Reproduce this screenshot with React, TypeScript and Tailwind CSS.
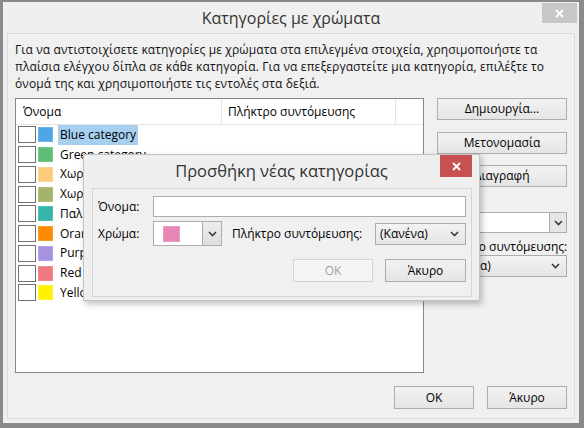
import React from 'react';

function Chevron() {
  return (
    <svg width="9" height="6" viewBox="0 0 9 6">
      <path d="M1 1l3.5 3.5L8 1" fill="none" stroke="#3c3c3c" strokeWidth="1.6" />
    </svg>
  );
}

function CloseX({ color }: { color: string }) {
  return (
    <svg width="9" height="9" viewBox="0 0 9 9">
      <path d="M1 1l7 7M8 1l-7 7" stroke={color} strokeWidth="1.8" />
    </svg>
  );
}

const categories = [
  { name: 'Blue category', color: 'bg-[#4ea6e6] border-[#6cb6ec]' },
  { name: 'Green category', color: 'bg-[#5fbd78] border-[#76c78b]' },
  { name: 'Χωρίς όνομα 1', color: 'bg-[#fdcb79] border-[#fdd38e]' },
  { name: 'Χωρίς όνομα 2', color: 'bg-[#a3b46a] border-[#b0bf7f]' },
  { name: 'Παλιά κατηγορία', color: 'bg-[#36b6a8] border-[#52c0b4]' },
  { name: 'Orange category', color: 'bg-[#ff8c00] border-[#ff9c26]' },
  { name: 'Purple category', color: 'bg-[#a893e0] border-[#b5a3e5]' },
  { name: 'Red category', color: 'bg-[#f07980] border-[#f38c92]' },
  { name: 'Yellow category', color: 'bg-[#fff100] border-[#fff333]' },
];

export default function App() {
  return (
    <div className="relative w-[584px] h-[428px] bg-[#8a8a8a] pl-[3px] pt-[2px] pr-[5px] pb-[5px] font-['Segoe_UI','Open_Sans',sans-serif] text-[12px] text-black">
      <div className="flex flex-col h-full bg-[#efefef]">
        {/* title bar */}
        <div className="relative h-[31px] shrink-0 flex items-center justify-center">
          <span className="text-[16px] text-[#333] leading-none">Κατηγορίες με χρώματα</span>
          <div className="absolute right-[2px] top-[1px] w-[35px] h-[20px] bg-[#c7c7c7] flex items-center justify-center">
            <CloseX color="#ffffff" />
          </div>
        </div>

        {/* main panel */}
        <div className="flex-1 mx-[4px] mb-[4px] border border-[#dadada] bg-[#f0f0f0] pl-[7px] pr-[7px] pt-[7px] flex flex-col">
          <p className="leading-[17px] tracking-[0.12px] text-[#111]">
            Για να αντιστοιχίσετε κατηγορίες με χρώματα στα επιλεγμένα στοιχεία, χρησιμοποιήστε τα
            πλαίσια ελέγχου δίπλα σε κάθε κατηγορία. Για να επεξεργαστείτε μια κατηγορία, επιλέξτε το
            όνομά της και χρησιμοποιήστε τις εντολές στα δεξιά.
          </p>

          <div className="mt-[6px] flex gap-[13px]">
            {/* list */}
            <div className="w-[409px] h-[275px] border border-[#828790] bg-white">
              <div className="flex h-[26px] border-b border-[#e5e5e5]">
                <div className="w-[206px] pl-[7px] flex items-center border-r border-[#e5e5e5]">Όνομα</div>
                <div className="w-[174px] pl-[6px] flex items-center border-r border-[#e5e5e5]">Πλήκτρο συντόμευσης</div>
              </div>
              <div className="flex flex-col">
                {categories.map((c, i) => (
                  <div key={c.name} className="h-[19.75px] flex items-center pl-[2px]">
                    <div className="w-[18px] h-[17px] border border-[#707070] bg-white" />
                    <div className={`ml-[2px] w-[15px] h-[15px] border ${c.color}`} />
                    <div className={`ml-[5px] h-[20px] px-[2px] flex items-center whitespace-nowrap ${i === 0 ? 'bg-[#a6cff0]' : ''}`}>
                      {c.name}
                    </div>
                  </div>
                ))}
              </div>
            </div>

            {/* right column */}
            <div className="w-[130px] flex flex-col">
              <button className="h-[22px] border border-[#adadad] bg-linear-to-b from-[#f2f2f2] to-[#e5e5e5]">Δημιουργία...</button>
              <button className="mt-[12px] h-[22px] border border-[#adadad] bg-linear-to-b from-[#f2f2f2] to-[#e5e5e5]">Μετονομασία</button>
              <button className="mt-[11px] h-[22px] border border-[#adadad] bg-linear-to-b from-[#f2f2f2] to-[#e5e5e5]">Διαγραφή</button>
              <div className="mt-[5px] h-[17px] leading-[17px]">Χρώμα:</div>
              <div className="mt-[3px] h-[21px] flex border border-[#abadb3] bg-white">
                <div className="flex-1" />
                <div className="w-[17px] border-l border-[#acacac] bg-[#e6e6e6] flex items-center justify-center">
                  <Chevron />
                </div>
              </div>
              <div className="mt-[5px] h-[17px] leading-[17px] whitespace-nowrap">Πλήκτρο συντόμευσης:</div>
              <div className="h-[22px] flex items-center justify-between border border-[#acacac] bg-linear-to-b from-[#f2f2f2] to-[#e5e5e5] pl-[5px] pr-[6px]">
                <span>(Κανένα)</span>
                <Chevron />
              </div>
            </div>
          </div>

          <div className="mt-[13px] flex justify-end gap-[13px]">
            <button className="w-[80px] h-[23px] border border-[#adadad] bg-linear-to-b from-[#f2f2f2] to-[#e5e5e5]">OK</button>
            <button className="w-[80px] h-[23px] border border-[#adadad] bg-linear-to-b from-[#f2f2f2] to-[#e5e5e5]">Άκυρο</button>
          </div>
        </div>
      </div>

      {/* overlay dialog */}
      <div className="absolute left-[83px] top-[154px] w-[397px] h-[147px] border border-[#c3c3c3] bg-[#efefef] shadow-[2px_3px_6px_rgba(0,0,0,0.25)] flex flex-col">
        <div className="relative h-[33px] shrink-0 flex items-center justify-center">
          <span className="text-[16.5px] text-[#333] leading-none">Προσθήκη νέας κατηγορίας</span>
          <div className="absolute right-[7px] top-0 w-[32px] h-[22px] bg-[#c75050] flex items-center justify-center">
            <CloseX color="#ffffff" />
          </div>
        </div>
        <div className="mx-[8px] mr-[7px] mb-[3px] flex-1 border border-[#d5d5d5] bg-[#f0f0f0] pl-[5px] pr-[5px] pt-[7px] flex flex-col">
          <div className="flex items-center">
            <div className="w-[55px]">Όνομα:</div>
            <div className="flex-1 h-[21px] border border-[#abadb3] bg-white" />
          </div>
          <div className="mt-[4px] flex items-center">
            <div className="w-[55px]">Χρώμα:</div>
            <div className="w-[69px] h-[25px] flex border border-[#abadb3] bg-white">
              <div className="flex-1 flex items-center pl-[9px]">
                <div className="w-[17px] h-[16px] bg-[#e687b6] border border-[#ea9cc3]" />
              </div>
              <div className="w-[19px] border-l border-[#acacac] bg-linear-to-b from-[#eeeeee] to-[#dedede] flex items-center justify-center">
                <Chevron />
              </div>
            </div>
            <div className="ml-[10px] whitespace-nowrap">Πλήκτρο συντόμευσης:</div>
            <div className="ml-auto w-[91px] h-[22px] flex items-center justify-between border border-[#acacac] bg-linear-to-b from-[#f2f2f2] to-[#e5e5e5] pl-[4px] pr-[6px]">
              <span>(Κανένα)</span>
              <Chevron />
            </div>
          </div>
          <div className="mt-[13px] flex justify-end gap-[12px]">
            <button className="w-[80px] h-[23px] border border-[#d3d3d3] bg-[#f4f4f4] text-[#a0a0a0]">OK</button>
            <button className="w-[81px] h-[23px] border border-[#adadad] bg-linear-to-b from-[#f2f2f2] to-[#e5e5e5]">Άκυρο</button>
          </div>
        </div>
      </div>
    </div>
  );
}
